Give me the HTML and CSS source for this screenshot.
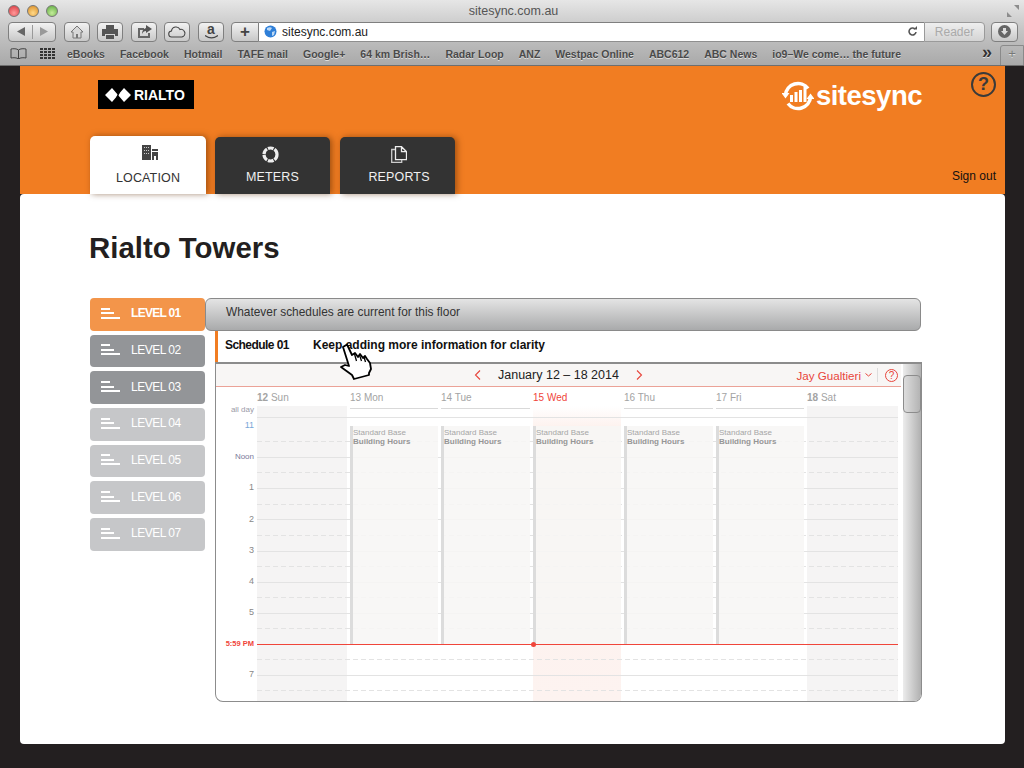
FILE: index.html

```html
<!DOCTYPE html>
<html lang="en">
<head>
  <meta charset="UTF-8">
  <title>sitesync.com.au</title>
  <link rel="stylesheet" href="styles.css">
</head>
<body>
  <div class="browser">
    <div class="titlebar">
      <div class="lights"><i class="red"></i><i class="amber"></i><i class="green"></i></div>
      <div class="window-title">sitesync.com.au</div>
      <svg class="fullscreen" width="12" height="12" viewBox="0 0 12 12"><path d="M7 0h5v5zM0 12V7l5 5z" fill="#8c8c8c"/></svg>
    </div>
    <div class="toolbar">
      <div class="btn btn-nav">
        <svg width="9" height="9" viewBox="0 0 9 9"><path d="M8 0v9L0 4.500z" fill="#666"/></svg>
        <span class="sep"></span>
        <svg width="9" height="9" viewBox="0 0 9 9"><path d="M1 0v9l8-4.500z" fill="#999"/></svg>
      </div>
      <div class="btn btn-home">
        <svg width="14" height="14" viewBox="0 0 14 14"><path d="M7 1 1 7h2v6h8V7h2z" fill="#d8d8d8" stroke="#777"/><path d="M6 13V9h2v4" fill="#777"/></svg>
      </div>
      <div class="btn btn-print">
        <svg width="16" height="14" viewBox="0 0 16 14"><path d="M4 0h8v4H4zM0 4h16v7h-3V9H3v2H0zM4 10h8v4H4z" fill="#555"/></svg>
      </div>
      <div class="btn btn-share">
        <svg width="15" height="13" viewBox="0 0 15 13"><path d="M1 3h6v2H3v6h8V8h2v5H1z" fill="#666"/><path d="M9 0l6 4-6 4V6C7 6 6 7 5 9c0-3 1-5 4-6z" fill="#555"/></svg>
      </div>
      <div class="btn btn-cloud">
        <svg width="18" height="12" viewBox="0 0 18 12"><path d="M4 11a3 3 0 0 1-.5-6A4.500 4.500 0 0 1 12 3.500 3.800 3.800 0 0 1 14 11z" fill="none" stroke="#444" stroke-width="1.100"/></svg>
      </div>
      <div class="btn btn-amazon">
        <span class="amazon-a">a</span>
        <svg width="13" height="4" viewBox="0 0 13 4"><path d="M0 .5c4 3 9 3 13 0" fill="none" stroke="#444" stroke-width="1.200"/></svg>
      </div>
      <div class="address">
        <div class="address-plus">+</div>
        <div class="address-field">
          <svg width="13" height="13" viewBox="0 0 13 13"><circle cx="6.500" cy="6.500" r="6" fill="#2f7fd8"/><path d="M3 3c2-1 4-1 5 0L6 6 3 5zM8 7l3-1-1 4-2 1z" fill="#bcd9f5"/></svg>
          <span class="url">sitesync.com.au</span>
          <svg class="reload" width="11" height="11" viewBox="0 0 11 11"><path d="M9 6a3.500 3.500 0 1 1-1-3" fill="none" stroke="#555" stroke-width="1.600"/><path d="M6.500 3.500h3.500V0z" fill="#555"/></svg>
        </div>
        <div class="reader">Reader</div>
      </div>
      <div class="btn btn-download">
        <svg width="13" height="13" viewBox="0 0 13 13"><circle cx="6.500" cy="6.500" r="6.500" fill="#666"/><path d="M5 3h3v3h2L6.500 10 3 6h2z" fill="#ddd"/></svg>
      </div>
    </div>
    <div class="bookmarks">
      <svg class="bm-book" width="17" height="11" viewBox="0 0 17 11"><path d="M8.500 2C7 .5 3 .5 1 1v9c2-.5 6-.5 7.500 1 1.500-1.500 5.500-1.500 7.500-1V1c-2-.5-6-.5-7.500 1zm0 0v9" fill="none" stroke="#444"/></svg>
      <svg class="bm-grid" width="15" height="11" viewBox="0 0 15 11"><path d="M0 0h3v2H0zM4 0h3v2H4zM8 0h3v2H8zM12 0h3v2h-3zM0 3h3v2H0zM4 3h3v2H4zM8 3h3v2H8zM12 3h3v2h-3zM0 6h3v2H0zM4 6h3v2H4zM8 6h3v2H8zM12 6h3v2h-3zM0 9h3v2H0zM4 9h3v2H4zM8 9h3v2H8zM12 9h3v2h-3z" fill="#333"/></svg>
      <span>eBooks</span>
      <span>Facebook</span>
      <span>Hotmail</span>
      <span>TAFE mail</span>
      <span>Google+</span>
      <span>64 km Brish…</span>
      <span>Radar Loop</span>
      <span>ANZ</span>
      <span>Westpac Online</span>
      <span>ABC612</span>
      <span>ABC News</span>
      <span>io9–We come… the future</span>
      <span class="bm-more">»</span>
      <div class="bm-newtab">+</div>
    </div>
  </div>

  <div class="page">
    <header class="site-header">
      <div class="header-top">
        <div class="rialto-logo">
          <svg width="26" height="14" viewBox="0 0 26 14"><path d="M0 7l7-7 6 7-6 7zM13 7l6-7 7 7-7 7z" fill="#fff"/><path d="M11 0l3 5-2 4 3 5" fill="none" stroke="#000" stroke-width="1.200"/></svg>
          <span>RIALTO</span>
        </div>
        <div class="sitesync-logo">
          <svg width="32" height="32" viewBox="0 0 32 32"><path d="M3.500 15A12.500 12.500 0 0 1 26 8.500M28.500 17A12.500 12.500 0 0 1 6 23.500" fill="none" stroke="#fff" stroke-width="3.600"/><path d="M-.5 13h8l-4 5.500zM24.500 19h8l-4-5.500z" fill="#fff"/><path d="M8 15h3v7H8zM12.500 12h3v10h-3zM17 10h3v12h-3zM21.500 7h3v15h-3z" fill="#fff"/></svg>
          <span>sitesync</span>
        </div>
        <div class="help-icon">?</div>
      </div>
      <div class="header-bottom">
        <nav class="tabs">
          <a class="tab tab-active">
            <svg class="icon-location" width="16" height="15" viewBox="0 0 16 15"><path d="M0 0h9v15H0zM10 4h6v2h-6zM10 7h6v8h-2v-4h-2v4h-2z" fill="#444"/><path d="M2 2h1v1H2zM4 2h1v1H4zM6 2h1v1H6zM2 5h1v1H2zM4 5h1v1H4zM6 5h1v1H6zM2 8h1v1H2zM4 8h1v1H4zM6 8h1v1H6z" fill="#ccc"/></svg>
            <span>LOCATION</span>
          </a>
          <a class="tab">
            <svg class="icon-meters" width="17" height="17" viewBox="0 0 17 17"><circle cx="8.500" cy="8.500" r="6.500" fill="none" stroke="#eee" stroke-width="3.200" stroke-dasharray="5.800 1"/></svg>
            <span>METERS</span>
          </a>
          <a class="tab tab-reports">
            <svg width="16" height="17" viewBox="0 0 16 17"><path d="M4.500.7h6l5 5v8h-11zM10.500.7v5h5" fill="none" stroke="#eee" stroke-width="1.300"/><path d="M4 3.500H.7v12.800h10V14" fill="none" stroke="#ccc" stroke-width="1.300"/></svg>
            <span>REPORTS</span>
          </a>
        </nav>
        <a class="sign-out">Sign out</a>
      </div>
    </header>

    <main class="panel">
      <h1>Rialto Towers</h1>
      <div class="content">
        <ul class="levels">
          <li class="level level-on"><i class="bars"></i>LEVEL 01</li>
          <li class="level level-mid"><i class="bars"></i>LEVEL 02</li>
          <li class="level level-mid"><i class="bars"></i>LEVEL 03</li>
          <li class="level"><i class="bars"></i>LEVEL 04</li>
          <li class="level"><i class="bars"></i>LEVEL 05</li>
          <li class="level"><i class="bars"></i>LEVEL 06</li>
          <li class="level"><i class="bars"></i>LEVEL 07</li>
        </ul>
        <div class="schedules">
          <div class="banner">Whatever schedules are current for this floor</div>
          <div class="schedule-row">
            <b class="schedule-name">Schedule 01</b>
            <b>Keep adding more information for clarity</b>
            <svg class="hand" width="33" height="38" viewBox="0 0 33 38"><path d="M1 25l4-2 4 1L3 5l4-2.500L12 13l3-2 3 4 2-3 3 4 2-2 2 3 3 4 1 6-2 4v2l-15 4-2-4z" fill="#fff" stroke="#000" stroke-width="1.800" stroke-linejoin="round"/><path d="M14.500 12l2 7M19.500 13l2 6M24 15l1.500 5" fill="none" stroke="#000" stroke-width="1.300"/></svg>
          </div>
          <div class="calendar">
            <div class="cal-main">
              <div class="cal-head">
                <div class="cal-nav">
                  <svg width="7" height="10" viewBox="0 0 7 10"><path d="M6 .5 1.500 5 6 9.500" fill="none" stroke="#e8453c" stroke-width="1.100"/></svg>
                  <span class="cal-range">January 12 – 18 2014</span>
                  <svg width="7" height="10" viewBox="0 0 7 10"><path d="M1 .5 5.500 5 1 9.500" fill="none" stroke="#e8453c" stroke-width="1.100"/></svg>
                </div>
                <div class="cal-user">
                  <span>Jay Gualtieri</span>
                  <svg width="7" height="4" viewBox="0 0 7 4"><path d="M.5.500 3.500 3l3-2.500" fill="none" stroke="#e8453c"/></svg>
                  <i class="cal-sep"></i>
                  <span class="cal-help">?</span>
                </div>
              </div>
              <div class="cal-days">
                <div class="d"><b>12</b> Sun</div>
                <div class="d">13 Mon</div>
                <div class="d">14 Tue</div>
                <div class="d d-today">15 Wed</div>
                <div class="d">16 Thu</div>
                <div class="d">17 Fri</div>
                <div class="d"><b>18</b> Sat</div>
              </div>
              <div class="cal-body">
                <div class="times">
                  <div class="t t-allday">all day</div>
                  <div class="t t-first">11</div>
                  <div class="t t-noon">Noon</div>
                  <div class="t">1</div>
                  <div class="t">2</div>
                  <div class="t">3</div>
                  <div class="t">4</div>
                  <div class="t">5</div>
                  <div class="t t-now">5:59 PM</div>
                  <div class="t">7</div>
                </div>
                <div class="cols">
                  <div class="col col-end"></div>
                  <div class="col"><div class="event">Standard Base<b>Building Hours</b></div></div>
                  <div class="col"><div class="event">Standard Base<b>Building Hours</b></div></div>
                  <div class="col col-today"><div class="event">Standard Base<b>Building Hours</b></div></div>
                  <div class="col"><div class="event">Standard Base<b>Building Hours</b></div></div>
                  <div class="col"><div class="event">Standard Base<b>Building Hours</b></div></div>
                  <div class="col col-end"></div>
                  <svg class="grid-lines" width="641" height="297" viewBox="0 0 641 297">
                    <path d="M0 13.500h641M0 53.500h641M0 84.500h641M0 115.500h641M0 147.500h641M0 178.500h641M0 209.500h641M0 271.500h641" stroke="#e3e3e3" fill="none"/>
                    <path d="M0 37.500h641M0 68.500h641M0 100.500h641M0 131.500h641M0 162.500h641M0 193.500h641M0 224.500h641M0 255.500h641M0 286.500h641" stroke="#e3e3e3" stroke-dasharray="5 3" fill="none"/>
                  </svg>
                  <div class="now-line"><i></i></div>
                </div>
              </div>
            </div>
            <div class="cal-scroll"><div class="cal-thumb"></div></div>
          </div>
        </div>
      </div>
    </main>
  </div>
</body>
</html>
```

FILE: styles.css

```css
* {
  box-sizing: border-box;
}
html, body {
  margin: 0;
  height: 768px;
  overflow: hidden;
}
body {
  background: #231f20;
  font-family: "Liberation Sans", Arial, sans-serif;
  color: #231f20;
}

/* browser chrome */
.browser {
  height: 66px;
  background: linear-gradient(#e6e6e6, #c6c6c6 45%, #a9a9a9);
  border-bottom: 1px solid #6e6e6e;
}
.titlebar {
  height: 21px;
  display: flex;
  align-items: center;
  padding: 0 5px 0 8px;
}
.lights {
  display: flex;
  gap: 7px;
  width: 100px;
}
.lights i {
  width: 12px;
  height: 12px;
  border-radius: 50%;
  border: 1px solid #777;
}
.lights .red { background: radial-gradient(circle at 50% 70%, #ff9a9a, #d8333a); }
.lights .amber { background: radial-gradient(circle at 50% 70%, #ffd98a, #d98a1e); }
.lights .green { background: radial-gradient(circle at 50% 70%, #c4ec9a, #5aa83c); }
.window-title {
  flex: 1;
  text-align: center;
  font-size: 12.500px;
  color: #555;
  padding-right: 88px;
}
.toolbar {
  height: 21px;
  display: flex;
  align-items: center;
  padding-left: 8px;
}
.btn {
  height: 20px;
  display: flex;
  align-items: center;
  justify-content: center;
  border: 1px solid #7f7f7f;
  border-radius: 4px;
  background: linear-gradient(#f2f2f2, #c8c8c8);
}
.btn-nav { width: 48px; gap: 6px; }
.btn-nav .sep { width: 1px; height: 14px; background: #999; }
.btn-home { width: 26px; margin-left: 8px; }
.btn-print { width: 26px; margin-left: 7px; }
.btn-share { width: 26px; margin-left: 8px; }
.btn-cloud { width: 26px; margin-left: 7px; }
.btn-amazon {
  width: 26px;
  margin-left: 8px;
  flex-direction: column;
  gap: 0;
}
.amazon-a {
  font-size: 14px;
  font-weight: bold;
  line-height: 11px;
  color: #444;
}
.address {
  display: flex;
  width: 754px;
  height: 20px;
  margin-left: 7px;
}
.address-plus {
  width: 28px;
  border: 1px solid #7f7f7f;
  border-radius: 4px 0 0 4px;
  background: linear-gradient(#f2f2f2, #c8c8c8);
  font-size: 17px;
  font-weight: bold;
  line-height: 17px;
  text-align: center;
  color: #444;
}
.address-field {
  flex: 1;
  display: flex;
  align-items: center;
  gap: 5px;
  padding: 0 6px 0 5px;
  background: #fff;
  border-top: 1px solid #7f7f7f;
  border-bottom: 1px solid #8f8f8f;
}
.url {
  flex: 1;
  font-size: 12px;
  color: #222;
}
.reader {
  width: 61px;
  border: 1px solid #9a9a9a;
  border-radius: 0 4px 4px 0;
  background: linear-gradient(#eee, #d4d4d4);
  font-size: 12px;
  line-height: 18px;
  text-align: center;
  color: #aaa;
}
.btn-download { width: 27px; margin-left: 6px; }
.bookmarks {
  position: relative;
  height: 23px;
  display: flex;
  align-items: center;
  padding-left: 10px;
  font-size: 10.500px;
  font-weight: bold;
  color: #4a4a4a;
  text-shadow: 0 1px 0 #ddd;
  overflow: hidden;
}
.bm-book { margin-right: 13px; }
.bm-grid { margin-right: 12px; }
.bookmarks span {
  margin-right: 15px;
  white-space: nowrap;
}
.bookmarks .bm-more {
  position: absolute;
  right: 32px;
  top: 0;
  margin: 0;
  font-size: 18px;
  color: #333;
}
.bm-newtab {
  position: absolute;
  right: 0;
  top: 3px;
  width: 24px;
  height: 22px;
  border: 1px solid #8a8a8a;
  border-radius: 3px 0 0 0;
  text-align: center;
  font-size: 13px;
  font-weight: normal;
  color: #777;
}

/* page */
.page {
  width: 985px;
  margin-left: 20px;
}
.site-header {
  height: 128px;
  background: #f17d22;
  display: flex;
  flex-direction: column;
  justify-content: space-between;
}
.header-top {
  position: relative;
  display: flex;
  justify-content: space-between;
  align-items: flex-start;
  padding: 14px 83px 0 78px;
}
.rialto-logo {
  width: 96px;
  height: 29px;
  background: #000;
  display: flex;
  align-items: center;
  gap: 3px;
  padding-left: 7px;
  color: #fff;
  font-size: 14px;
  font-weight: bold;
}
.sitesync-logo {
  display: flex;
  align-items: center;
  gap: 2px;
  color: #fff;
  font-size: 27.500px;
  font-weight: bold;
  letter-spacing: -.5px;
  line-height: 30px;
}
.help-icon {
  position: absolute;
  top: 6px;
  right: 9px;
  width: 25px;
  height: 25px;
  border: 2px solid #3a3a3a;
  border-radius: 50%;
  text-align: center;
  font-size: 18px;
  font-weight: bold;
  line-height: 21px;
  color: #3a3a3a;
}
.header-bottom {
  display: flex;
  justify-content: space-between;
  align-items: flex-end;
  padding: 0 9px 0 70px;
}
.tabs {
  display: flex;
  align-items: flex-end;
  gap: 9px;
}
.tab {
  width: 115px;
  height: 57px;
  display: flex;
  flex-direction: column;
  align-items: center;
  padding-top: 9px;
  gap: 7px;
  background: #333;
  border-radius: 5px 5px 0 0;
  box-shadow: 2px 0 6px rgba(90, 40, 0, .55);
  color: #f0f0f0;
  font-size: 12.500px;
  letter-spacing: .15px;
}
.tab-active {
  width: 116px;
  height: 58px;
  background: #fff;
  color: #333;
  gap: 11px;
}
.tab-reports {
  margin-left: 1px;
  padding-left: 3px;
}
.icon-location { margin-left: 3px; }
.icon-meters { margin-right: 5px; }
.sign-out {
  font-size: 12px;
  color: #111;
  padding-bottom: 11px;
}
.panel {
  height: 550px;
  background: #fff;
  border-radius: 4px;
  padding: 37px 84px 0 69px;
}
.panel h1 {
  margin: 0;
  font-size: 29.400px;
  line-height: 33px;
  color: #231f20;
}
.content {
  display: flex;
  margin-top: 34px;
}

/* levels */
.levels {
  list-style: none;
  width: 115px;
  margin: 0 0 0 1px;
  padding: 0;
  display: flex;
  flex-direction: column;
  gap: 4px;
}
.level {
  height: 32.670px;
  display: flex;
  align-items: center;
  gap: 11px;
  padding: 0 0 2px 11px;
  background: #c6c7c9;
  border-radius: 4px;
  color: #fff;
  font-size: 12px;
  letter-spacing: -.5px;
}
.level-on { background: #f3954a; font-weight: bold; letter-spacing: -.7px; }
.level-mid { background: #939598; }
.bars {
  width: 19px;
  height: 11px;
  background:
    linear-gradient(#fff, #fff) 0 0 / 9px 2px no-repeat,
    linear-gradient(#fff, #fff) 0 4.500px / 13px 2px no-repeat,
    linear-gradient(#fff, #fff) 0 9px / 19px 2px no-repeat;
}

/* schedule area */
.schedules {
  width: 716px;
  position: relative;
}
.banner {
  height: 33px;
  padding-left: 20px;
  background: linear-gradient(#e4e4e4, #a9aaab);
  border: 1px solid #8a8a8a;
  border-radius: 6px;
  font-size: 11.900px;
  line-height: 26px;
  color: #333;
}
.schedule-row {
  position: relative;
  height: 31px;
  margin-left: 10px;
  border-left: 3px solid #f17d22;
  display: flex;
  align-items: center;
  gap: 24px;
  padding: 0 0 4px 7px;
  font-size: 12px;
  color: #111;
}
.schedule-name {
  letter-spacing: -.55px;
}
.hand {
  position: absolute;
  left: 122px;
  top: 11px;
  z-index: 5;
}
.calendar {
  height: 340px;
  margin-left: 10px;
  width: 707px;
  display: flex;
  border: 1px solid #8c8c8c;
  border-top-width: 2px;
  border-radius: 0 0 8px 8px;
  overflow: hidden;
}
.cal-main {
  width: 685px;
}
.cal-head {
  height: 23px;
  display: flex;
  justify-content: space-between;
  align-items: center;
  background: #f8f6f5;
  border-bottom: 1px solid #eba297;
  padding-right: 3px;
}
.cal-nav {
  display: flex;
  align-items: center;
  gap: 17px;
  margin-left: 258px;
}
.cal-range {
  font-size: 12.500px;
  color: #222;
}
.cal-user {
  display: flex;
  align-items: center;
  gap: 4px;
  font-size: 11.600px;
  color: #e8453c;
}
.cal-sep {
  width: 1px;
  height: 14px;
  margin-left: 1px;
  background: #ddd;
}
.cal-help {
  width: 13px;
  height: 13px;
  margin-left: 3px;
  border: 1px solid #e8453c;
  border-radius: 50%;
  font-size: 10px;
  line-height: 11px;
  text-align: center;
}
.cal-days {
  display: grid;
  grid-template-columns: 90px 88px 89px 88px 89px 88px 91px;
  column-gap: 3px;
  height: 17px;
  padding-left: 41px;
}
.d {
  border-bottom: 1px solid #d9d9d9;
  font-size: 10px;
  line-height: 21px;
  color: #a3a3a3;
}
.d-today {
  border-bottom-color: #f0453a;
  color: #f0453a;
}
.cal-body {
  display: flex;
  height: 297px;
  overflow: hidden;
}
.times {
  width: 41px;
  padding-right: 3px;
  text-align: right;
  font-size: 9px;
  color: #888;
}
.t {
  height: 31.100px;
  line-height: 31.100px;
}
.t-allday {
  height: 6.300px;
  line-height: 12px;
  font-size: 8px;
  color: #9a9aa8;
}
.t-first { color: #7aa7d8; }
.t-noon { color: #7a7a9a; font-size: 8px; }
.t-now {
  font-size: 7.500px;
  font-weight: bold;
  color: #f0453a;
}
.cols {
  position: relative;
  display: grid;
  grid-template-columns: 90px 88px 89px 88px 89px 88px 91px;
  column-gap: 3px;
  width: 641px;
}
.col {
  padding-top: 22px;
}
.col-end { background: #f5f4f4; margin-top: 2px; }
.col-today { background: linear-gradient(#fff, #fdf0ec 8%, #fdf3f0); margin-top: 2px; padding-top: 20px; }
.grid-lines {
  position: absolute;
  left: 0;
  top: 0;
}
.event {
  position: relative;
  z-index: 1;
  height: 218px;
  padding: 2px 0 0;
  background: rgba(247, 246, 245, .88);
  border-left: 3px solid #dcdcdc;
  font-size: 8px;
  line-height: 9px;
  color: #a6a6a6;
}
.event b {
  display: block;
  color: #969696;
}
.now-line {
  position: absolute;
  z-index: 2;
  left: 0;
  right: 0;
  top: 240px;
  height: 1px;
  background: #f0453a;
}
.now-line i {
  position: absolute;
  left: 274px;
  top: -2px;
  width: 5px;
  height: 5px;
  border-radius: 50%;
  background: #f0453a;
}
.cal-scroll {
  position: relative;
  flex: 1;
  margin-left: 2px;
  background: linear-gradient(90deg, #ececec, #b0b0b0);
}
.cal-thumb {
  position: absolute;
  left: 0;
  right: 0;
  top: 11px;
  height: 38px;
  background: linear-gradient(90deg, #ddd, #b4b4b4);
  border: 1px solid #8c8c8c;
  border-radius: 4px;
}
```
